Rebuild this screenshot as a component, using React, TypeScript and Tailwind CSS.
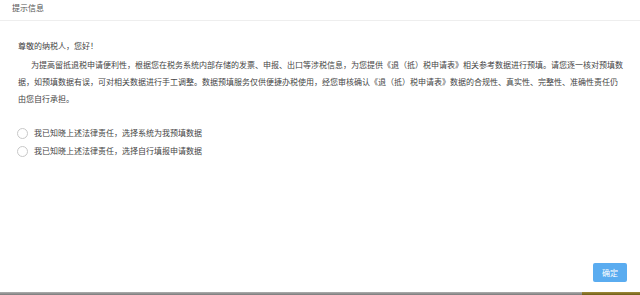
export default function App() {
  const options = [
    "我已知晓上述法律责任，选择系统为我预填数据",
    "我已知晓上述法律责任，选择自行填报申请数据",
  ]

  return (
    <div
      className="flex flex-col w-[640px] h-[295px] bg-white text-[#444] overflow-hidden"
      style={{ fontFamily: '"Noto Sans CJK SC", "Noto Sans", sans-serif' }}
    >
      <div className="h-[21px] border-b border-[#eeeeee] pl-[12px] pt-[3px] text-[8px] leading-[10px] text-[#555]">
        提示信息
      </div>

      <div className="pl-[18px] pr-[15px] pt-[16px] text-[8px]">
        <p className="leading-[17px]">尊敬的纳税人，您好！</p>
        <p className="mt-[2px] leading-[17px] indent-[13px]">
          为提高留抵退税申请便利性，根据您在税务系统内部存储的发票、申报、出口等涉税信息，为您提供《退（抵）税申请表》相关参考数据进行预填。请您逐一核对预填数据，如预填数据有误，可对相关数据进行手工调整。数据预填服务仅供便捷办税使用，经您审核确认《退（抵）税申请表》数据的合规性、真实性、完整性、准确性责任仍由您自行承担。
        </p>
      </div>

      <div className="mt-[17px] flex flex-col pl-[17px]">
        {options.map((label) => (
          <label key={label} className="flex h-[18px] items-center gap-[6px] text-[8px]">
            <span className="h-[11px] w-[11px] rounded-full border border-[#c8c8c8] bg-white" />
            <span>{label}</span>
          </label>
        ))}
      </div>

      <div className="flex-1" />

      <div className="flex justify-end pr-[13px] pb-[10px]">
        <button className="h-[19px] w-[34px] rounded-[2px] bg-[#5aacf0] text-[8px] text-white">
          确定
        </button>
      </div>

      <div className="flex h-[3px]">
        <div className="w-[582px] bg-gradient-to-b from-[#b0b0b0] to-[#7a7a7a]" />
        <div className="flex-1 bg-gradient-to-b from-[#a08c3a] to-[#6e5c16]" />
      </div>
    </div>
  )
}
